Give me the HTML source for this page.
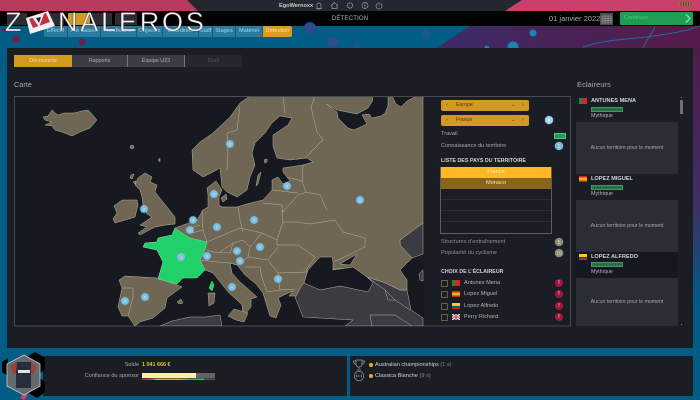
<!DOCTYPE html>
<html lang="fr"><head><meta charset="utf-8"><title>Détection</title>
<style>
html,body{margin:0;padding:0;width:700px;height:400px;overflow:hidden;background:#005d85}
body{position:relative;font-family:"Liberation Sans","DejaVu Sans",sans-serif;color:#b5b7ba}
.a{position:absolute;white-space:nowrap}
.t{position:absolute;white-space:nowrap;font-size:5.6px;line-height:8px;height:8px}
.tab{position:absolute;top:26px;height:11px;line-height:11px;text-align:center;font-size:5.6px;background:#2a7ba2;color:#a9d2e4;border-right:1px solid #0c6388;box-sizing:border-box}
.sub{position:absolute;top:55px;height:12px;line-height:12px;text-align:center;font-size:5.4px;background:#3a3d44;color:#a9abaf;box-sizing:border-box;border-right:1px solid #777}
.sel{position:absolute;left:441px;width:88px;height:11px;background:#d29a20;border-radius:2px;color:#4a3608;font-size:5.2px;line-height:11px}
.cb{position:absolute;left:441px;width:7px;height:7px;box-sizing:border-box;border:1px solid #6a6248;border-radius:1px}
.bdg{position:absolute;left:555px;width:8px;height:8px;border-radius:50%;background:#a3173f;color:#e8c6d0;font-size:5px;line-height:8px;text-align:center;font-weight:bold}
.fl{position:absolute;width:8px;height:6px;overflow:hidden}
.box{position:absolute;left:576px;width:102px;background:#2a2d33;color:#a7a9ad;text-align:center;font-size:5.2px}
.bar{position:absolute;left:591px;width:30px;height:3px;border:1px solid #5c8a6c;background:repeating-linear-gradient(90deg,#1f7a42 0 2.4px,#175a33 2.4px 3px)}
.nm{position:absolute;left:591px;font-size:5.6px;font-weight:bold;color:#d4d5d8;line-height:8px;white-space:nowrap}
.my{position:absolute;left:591px;font-size:5.4px;color:#b0b2b5;line-height:8px}
.logo{-webkit-text-stroke:.6px rgba(10,10,14,.55)}
</style></head><body>

<!-- background -->
<svg class="a" style="left:0;top:0" width="700" height="400" viewBox="0 0 700 400">
<defs>
<linearGradient id="pur" x1="0" y1="0" x2="1" y2="0"><stop offset="0" stop-color="#3b2c68"/><stop offset="1" stop-color="#561a48"/></linearGradient>
<linearGradient id="fade" x1="0" y1="0" x2="0" y2="1"><stop offset="0" stop-color="#4f1c4c"/><stop offset=".6" stop-color="#3f3064"/><stop offset="1" stop-color="#005d85"/></linearGradient>
<linearGradient id="conf" x1="0" y1="0" x2="1" y2="0"><stop offset="0" stop-color="#c9232f"/><stop offset=".15" stop-color="#d9432a"/><stop offset=".25" stop-color="#e3b52c"/><stop offset=".6" stop-color="#d5b52d"/><stop offset=".8" stop-color="#3fae4b"/><stop offset="1" stop-color="#2ed06e"/></linearGradient>
</defs>
<rect width="700" height="400" fill="#005d85"/>
<polygon points="470,26 700,26 700,48 437,48" fill="url(#pur)"/>
<rect x="693" y="48" width="7" height="260" fill="url(#fade)"/>
<rect x="0" y="0" width="700" height="11" fill="#23272e"/>
<polygon points="0,0 187,0 198,11 0,11" fill="#b83a5c"/>
<polygon points="522,0 700,0 700,11 505,11" fill="#c9406a"/>
<rect x="0" y="11" width="700" height="15" fill="#020203"/>
<circle cx="16" cy="39" r="3.5" fill="#7a1a4c"/><circle cx="82" cy="42" r="3.3" fill="#7a1a4c"/><circle cx="4" cy="30" r="2" fill="#5a2a60"/>
<circle cx="310" cy="28" r="6" fill="#2d4a8c"/><circle cx="333" cy="42" r="5.5" fill="#2b4f90"/>
<circle cx="426" cy="35" r="5" fill="#185a88"/><circle cx="357" cy="45" r="4" fill="#115a88"/>
<circle cx="533" cy="33" r="3.5" fill="#1787ad"/><circle cx="513" cy="47" r="5.5" fill="#1787ad"/><circle cx="487" cy="48" r="2.5" fill="#1787ad"/>
<path d="M583 47C610 38 630 40 660 35C675 33 690 30 700 26" fill="none" stroke="#256a9a" stroke-width="1"/>
<path d="M655 27C650 36 646 42 643 48" fill="none" stroke="#256a9a" stroke-width="1"/>
<rect x="7" y="48" width="686" height="300" fill="#1a1d24"/>
<rect x="43" y="356" width="304" height="40" fill="#1a1d24"/>
<rect x="350" y="356" width="343" height="40" fill="#1a1d24"/>
</svg>

<!-- top bar -->
<div class="a" style="left:279px;top:2px;font-size:5.6px;line-height:8px;font-weight:bold;color:#ccced1">EgoWernoxx</div>
<svg class="a" style="left:312px;top:0" width="80" height="11" viewBox="0 0 80 11" fill="none" stroke="#9a9da2" stroke-width=".7">
<path d="M4 8.5h6M5 8V5a2 2 0 0 1 4 0v3M6.5 9.5h1"/>
<path d="M19 5.5l3.5-3 3.5 3M20 5v3.5h5V5"/>
<circle cx="38" cy="5.5" r="2.6" stroke-dasharray="1.2 .6" stroke-width="1.1"/>
<circle cx="53" cy="5.5" r="3"/><path d="M53 4.5v2.8M53 3.4v.5"/>
<path d="M65.5 3.4a3 3 0 1 0 3 0M67 2.4v3"/>
</svg>
<div class="a" style="left:679px;top:2px;width:13px;height:4px;background:repeating-linear-gradient(90deg,#8a7a2c 0 1.5px,#7a3a3a 1.5px 2.5px)"></div>

<!-- black bar -->
<div class="a" style="left:7px;top:13px;width:20px;height:12px;background:#2a2d33"></div>
<div class="a" style="left:44px;top:13px;width:20px;height:12px;background:#2a2d33"></div>
<div class="a" style="left:68px;top:13px;width:22px;height:12px;background:#d29a20;border-radius:1px"></div>
<div class="a" style="left:92px;top:13px;width:20px;height:12px;background:#2a2d33"></div>
<div class="a" style="left:115px;top:13px;width:22px;height:12px;background:#2a2d33"></div>
<div class="a" style="left:0;top:13px;width:700px;text-align:center;font-size:6.300px;line-height:12px;color:#a9abae">DÉTECTION</div>
<div class="a" style="left:549px;top:13px;font-size:7.500px;line-height:12px;color:#a9abae">01 janvier 2022</div>
<svg class="a" style="left:600px;top:13px" width="13" height="12" viewBox="0 0 13 12"><rect width="13" height="12" fill="#4a4d52"/><path d="M2 3h9v7H2zM2 5.5h9M2 7.8h9M5 3v7M8 3v7" fill="none" stroke="#aaa" stroke-width=".6"/></svg>
<div class="a" style="left:620px;top:12px;width:73px;height:13px;background:#1f9d55;border-radius:1px;color:#3fd07c;font-size:5.6px;line-height:13px;text-indent:4px">Continuer</div>
<svg class="a" style="left:684px;top:13px" width="8" height="11" viewBox="0 0 8 11"><path d="M2 1.5l4 4-4 4" fill="none" stroke="#7fe3a8" stroke-width="1.3"/></svg>

<!-- nav tabs -->
<div class="tab" style="left:44px;width:24px">Effectif</div>
<div class="tab" style="left:68px;width:33px">Pré Saison</div>
<div class="tab" style="left:101px;width:36px">Planification</div>
<div class="tab" style="left:137px;width:26px">Objectifs</div>
<div class="tab" style="left:163px;width:36px">Coordinier</div>
<div class="tab" style="left:199px;width:14px">Staff</div>
<div class="tab" style="left:213px;width:23px">Stages</div>
<div class="tab" style="left:236px;width:27px">Matériel</div>
<div class="tab" style="left:263px;width:29px;background:#d89e22;color:#f7e3b0;border-radius:0 2px 2px 0;border:0">Détection</div>

<!-- logo watermark -->
<div class="a logo" style="left:5px;top:7px;font-size:27px;line-height:30px;color:#f4f4f4">Z</div>
<svg class="a" style="left:24px;top:9px" width="32" height="26" viewBox="0 0 32 26"><polygon points="2,9 24,2 31,17 6,25" fill="#f2f2f2"/><polygon points="5,10 22,4 26,13 9,19" fill="#c62f4a"/><polygon points="8,8 20,5 15,18" fill="#f2f2f2"/><polygon points="12,9 17,8 15,14" fill="#222"/></svg>
<div class="a logo" style="left:58px;top:7px;font-size:27px;line-height:30px;color:#f4f4f4;letter-spacing:2.800px">NALEROS</div>

<!-- sub tabs -->
<div class="sub" style="left:14px;width:58px;background:#d29a20;color:#f3deab;border:0">Découverte</div>
<div class="sub" style="left:72px;width:56px">Rapports</div>
<div class="sub" style="left:128px;width:57px">Équipe U23</div>
<div class="sub" style="left:185px;width:57px;background:#24272d;color:#4f5257;border:0">Draft</div>
<div class="a" style="left:14px;top:80px;font-size:7.300px;line-height:10px;color:#a5a7ab">Carte</div>
<div class="a" style="left:577px;top:80px;font-size:7.600px;line-height:10px;color:#a5a7ab">Eclaireurs</div>

<!-- map -->
<svg class="a" style="left:0;top:0" width="700" height="400" viewBox="0 0 700 400">
<defs><clipPath id="mc"><rect x="15" y="97" width="408.500" height="229"/></clipPath></defs>
<rect x="14.500" y="96.500" width="556" height="229.500" fill="#161920" stroke="#484b51" stroke-width="1"/>
<rect x="424" y="97" width="146" height="228" fill="#1a1d24"/>
<g clip-path="url(#mc)" stroke="#b9b4a2" stroke-width=".5" stroke-linejoin="round">
<!-- north africa + gray lands -->
<polygon fill="#3a3c41" points="160,326 172,321 190,317 205,317 220,315 222,326"/>
<polygon fill="#3a3c41" points="423,223 400,240 400,245 412,258 423,254"/>
<polygon fill="#3a3c41" points="367,277 383,282 400,290 407,290 411,310 423,318 423,326 345,326 353,320 320,318 303,317 295,297 300,280"/>
<polygon fill="#3a3c41" points="423,270 419,274 420,280 423,281"/>
<!-- mainland -->
<polygon fill="#6f6753" points="250,96 423,96 423,223 400,240 400,245 412,258 400,270 407,280 407,290 400,290 383,282 367,277 350,268 320,270 302,285 296,296 289,296 293,291 284,295 278,298 281,305 276,318 270,316 266,303 263,293 256,284 245,275 237,265 230,263 232,273 240,282 247,288 257,297 251,299 251,307 246,313 243,315 242,305 237,300 228,292 221,283 213,273 205,270 190,277 183,278 177,284 158,279 163,262 157,250 143,247 145,243 157,242 158,238 172,235 175,228 186,224 197,220 203,210 208,207 208,195 207,188 216,181 222,190 219,197 219,205 222,207 237,207 247,204 263,200 272,190 272,180 278,177 283,184 290,181 283,172 283,168 303,165 313,162 307,158 290,160 277,158 273,146 273,135 288,125 292,118 280,116 272,123 265,133 255,143 252,153 255,165 250,177 247,190 237,197 227,192 222,187 220,168 213,172 203,177 193,170 192,150 200,142 213,133 230,117 240,103"/>
<polygon fill="#6f6753" points="221,198 226,194 227,199 223,202"/>
<polygon fill="#6f6753" points="264,160 267,159 267,162 265,163"/><polygon fill="#6f6753" points="258,175 261,172 258,184 256,186"/>
<!-- seas overlay -->
<polygon fill="#161920" points="326,104 337,110 357,114 368,108 373,100 372,96 388,96 388,106 385,113 381,116 372,118 369,114 362,115 367,124 354,130 348,128 338,118 337,112"/>
<polygon fill="#161920" points="392,96 396,104 401,107 407,101 417,96"/>
<polygon fill="#161920" points="304,283 308,270 320,257 332,257 333,262 333,270 353,267 367,277 373,283 368,292 340,286 320,290"/>
<polygon fill="#161920" points="340,264 357,254 350,265"/>
<!-- UK etc -->
<polygon fill="#6f6753" points="138,178 145,173 152,177 150,182 157,185 155,192 167,207 175,217 175,224 166,225 155,227 140,235 138,233 147,227 140,225 152,217 147,214 143,205 142,197 140,190 135,185"/>
<polygon fill="#6f6753" points="122,200 137,200 138,205 135,217 132,218 115,223 113,219 117,213 114,206"/>
<polygon fill="#6f6753" points="131,175 134,174 132,179 130,178"/><polygon fill="#6f6753" points="133,182 136,181 135,184"/>
<polygon fill="#6f6753" points="130,146 133,145 134,148 131,149"/><polygon fill="#6f6753" points="158,160 160,158 160,162"/>
<polygon fill="#6f6753" points="43,117 48,116 52,110 55,113 58,115 64,113 68,113 74,113 82,111 88,110 91,113 97,120 90,128 80,132 72,136 62,132 55,130 52,126 45,125 52,122 45,120"/>
<!-- Spain -->
<polygon fill="#6f6753" points="119,280 125,276 157,278 177,285 182,287 167,298 165,308 153,318 140,322 135,326 128,316 122,316 118,307 122,288"/>
<polygon fill="#6f6753" points="177,302 181,299 183,303 179,304"/>
<polygon fill="#6f6753" points="208,293 215,293 214,303 209,306"/>
<polygon fill="#6f6753" points="228,316 234,309 248,313 244,322 236,320"/>
<!-- france -->
<polygon fill="#22d06a" stroke="#6fdc9a" points="175,228 182,233 190,238 207,242 205,250 200,260 205,270 197,278 183,278 177,284 158,279 163,262 157,250 143,247 145,243 157,242 158,238 172,235"/>
<polygon fill="#22d06a" stroke="#6fdc9a" points="212,281 214,285 212,291 209,288"/>
<!-- borders -->
<g fill="none">
<polyline points="122,288 133,288 133,297 128,316"/>
<polyline points="240,106 237,130 227,133 228,152 227,170"/>
<polyline points="283,96 285,113"/>
<polyline points="315,96 311,107 317,132 323,140 305,158"/>
<polyline points="287,177 302,181"/><polyline points="303,165 302,182 306,192"/>
<polyline points="272,190 298,193"/><polyline points="263,203 282,205"/>
<polyline points="306,192 320,195 327,210"/><polyline points="282,205 283,212 298,195 306,192"/>
<polyline points="238,207 240,220 243,232"/><polyline points="282,210 283,222 277,240 277,245"/>
<polyline points="283,222 297,222 310,224 335,220 343,232 365,238 365,247 353,253 333,262"/>
<polyline points="277,245 298,245 315,257 306,270 307,272"/>
<polyline points="228,233 240,228 262,233 277,240"/>
<polyline points="220,252 233,243 243,240 250,247 248,257"/>
<polyline points="250,247 262,233"/><polyline points="248,257 268,260 278,247"/>
<polyline points="268,260 278,273 307,272"/><polyline points="278,273 280,290 295,289"/>
<polyline points="245,267 260,267 262,278 267,292 280,290"/><polyline points="237,265 248,257"/>
<polyline points="202,210 203,230 207,242 228,233"/>
<polyline points="185,230 200,225"/><polyline points="192,233 203,230"/>
<polyline points="207,250 213,252 230,253 233,243"/><polyline points="200,260 217,262 230,263 237,265"/>
<polyline points="367,277 385,290 395,300 410,310"/><polyline points="370,315 395,315 412,326"/>
<polyline points="385,290 388,300 395,300"/>
<polyline points="370,315 372,326"/>
</g>
</g>
<!-- pins -->
<g fill="#7dc2e6" stroke="#7dc2e6" stroke-opacity=".4" stroke-width="1.400" stroke-dasharray="1 .6">
<circle cx="144" cy="209" r="3.800"/><circle cx="230" cy="144" r="3.800"/><circle cx="214" cy="194" r="3.800"/><circle cx="193" cy="220" r="3.800"/><circle cx="190" cy="230" r="3.800"/>
<circle cx="287" cy="186" r="3.800"/><circle cx="360" cy="200" r="3.800"/><circle cx="254" cy="220" r="3.800"/><circle cx="217" cy="227" r="3.800"/>
<circle cx="207" cy="256" r="3.800"/><circle cx="145" cy="297" r="3.800"/><circle cx="125" cy="301" r="3.800"/><circle cx="237" cy="251" r="3.800"/><circle cx="240" cy="261" r="3.800"/>
<circle cx="260" cy="247" r="3.800"/><circle cx="278" cy="279" r="3.800"/><circle cx="232" cy="287" r="3.800"/>
<circle cx="181" cy="257" r="3.800" fill="#8fbfdc"/>
</g>
<g font-family="Liberation Sans,sans-serif" font-size="4" fill="#d8edf8" text-anchor="middle">
<text x="144" y="210.500">7</text><text x="230" y="145.500">6</text><text x="214" y="195.500">6</text><text x="193" y="221.500">3</text><text x="190" y="231.500">1</text>
<text x="287" y="187.500">6</text><text x="360" y="201.500">6</text><text x="254" y="221.500">2</text><text x="217" y="228.500">2</text>
<text x="207" y="257.500">6</text><text x="145" y="298.500">4</text><text x="125" y="302.500">0</text><text x="237" y="252.500">0</text><text x="240" y="262.500">6</text>
<text x="260" y="248.500">5</text><text x="278" y="280.500">5</text><text x="232" y="288.500">4</text><text x="181" y="258.500">1</text>
</g>
</svg>

<!-- right controls -->
<div class="sel" style="top:100px"><span style="position:absolute;left:5px">‹</span><span style="position:absolute;left:15px">Europe</span><span style="position:absolute;left:70px">⌄</span><span style="position:absolute;left:81px">›</span></div>
<div class="sel" style="top:115px"><span style="position:absolute;left:5px">‹</span><span style="position:absolute;left:15px">France</span><span style="position:absolute;left:70px">⌄</span><span style="position:absolute;left:81px">›</span></div>
<svg class="a" style="left:544px;top:115px" width="10" height="10" viewBox="0 0 10 10"><circle cx="5" cy="5" r="4.300" fill="#7fc4e8"/><path d="M5 1v8M1.500 3l7 4M1.500 7l7-4" stroke="#fff" stroke-width=".7"/></svg>
<div class="t" style="left:441px;top:130px;color:#a8aaae">Travail</div>
<div class="a" style="left:554px;top:133px;width:10px;height:4px;border:.5px solid #56c47c;background:#1f9d55"></div>
<div class="t" style="left:441px;top:142px;color:#a8aaae">Connaissance du territoire</div>
<svg class="a" style="left:554px;top:141px" width="10" height="10" viewBox="0 0 10 10"><circle cx="5" cy="5" r="4.300" fill="#7fb8da"/><text x="5" y="6.800" font-size="5" fill="#dff" text-anchor="middle" font-family="Liberation Sans">1</text></svg>
<div class="t" style="left:441px;top:157px;font-weight:bold;font-size:5.300px;color:#d0d1d4">LISTE DES PAYS DU TERRITOIRE</div>

<div class="a" style="left:440px;top:167px;width:110px;height:66px;border:1px solid #5a5d63;border-top:0"></div>
<div class="a" style="left:441px;top:189px;width:110px;height:11px;border-bottom:1px solid #2c3037;box-sizing:border-box"></div>
<div class="a" style="left:441px;top:200px;width:110px;height:11px;border-bottom:1px solid #2c3037;box-sizing:border-box"></div>
<div class="a" style="left:441px;top:211px;width:110px;height:11px;border-bottom:1px solid #2c3037;box-sizing:border-box"></div>
<div class="a" style="left:441px;top:167px;width:110px;height:11px;background:#fdb827;color:#f7edc8;font-size:5.600px;line-height:11px;text-align:center">France</div>
<div class="a" style="left:441px;top:178px;width:110px;height:11px;background:#89651c;color:#eee3c0;font-size:5.600px;line-height:11px;text-align:center">Monaco</div>

<div class="t" style="left:441px;top:238px;color:#8e9094">Structures d'entraînement</div>
<div class="t" style="left:441px;top:249px;color:#8e9094">Popularité du cyclisme</div>
<svg class="a" style="left:554px;top:237px" width="10" height="21" viewBox="0 0 10 21"><circle cx="5" cy="5" r="4.300" fill="#8d8a78"/><circle cx="5" cy="16" r="4.300" fill="#8d8a78"/><text x="5" y="6.800" font-size="5" fill="#d6d4c6" text-anchor="middle" font-family="Liberation Sans">5</text><text x="5" y="17.800" font-size="5" fill="#d6d4c6" text-anchor="middle" font-family="Liberation Sans">10</text></svg>
<div class="t" style="left:441px;top:268px;font-weight:bold;font-size:5.300px;color:#d0d1d4">CHOIX DE L'ÉCLAIREUR</div>

<div class="cb" style="top:280px"></div><div class="cb" style="top:291px"></div><div class="cb" style="top:303px"></div><div class="cb" style="top:314px"></div>
<div class="fl" style="left:452px;top:280px;background:linear-gradient(90deg,#1a8a3a 0 40%,#d8232a 40%)"></div>
<div class="fl" style="left:452px;top:291px;background:linear-gradient(#c8262a 0 25%,#f1b517 25% 75%,#c8262a 75%)"></div>
<div class="fl" style="left:452px;top:303px;background:linear-gradient(#f1d017 0 50%,#2a3f90 50% 75%,#c8262a 75%)"></div>
<svg class="fl" style="left:452px;top:314px" viewBox="0 0 8 6"><rect width="8" height="6" fill="#2b3f88"/><path d="M0 0l8 6M8 0L0 6" stroke="#eee" stroke-width="1.200"/><path d="M4 0v6M0 3h8" stroke="#eee" stroke-width="2"/><path d="M4 0v6M0 3h8" stroke="#c8262a" stroke-width="1"/></svg>
<div class="t" style="left:464px;top:279px;color:#b0b2b5">Antunes Mena</div>
<div class="t" style="left:464px;top:290px;color:#b0b2b5">Lopez Miguel</div>
<div class="t" style="left:464px;top:302px;color:#b0b2b5">Lopez Alfredo</div>
<div class="t" style="left:464px;top:313px;color:#b0b2b5">Perry Richard</div>
<div class="bdg" style="top:279px">!</div><div class="bdg" style="top:290px">!</div><div class="bdg" style="top:302px">!</div><div class="bdg" style="top:313px">!</div>

<!-- scouts -->
<div class="a" style="left:576px;top:252px;width:102px;height:26px;background:#15181e"></div>
<div class="fl" style="left:579px;top:98px;background:linear-gradient(90deg,#1a8a3a 0 40%,#d8232a 40%)"></div>
<div class="nm" style="top:97px">ANTUNES MENA</div><div class="bar" style="top:107px"></div><div class="my" style="top:112px">Mythique</div>
<div class="box" style="top:122px;height:52px;line-height:52px">Aucun territoire pour le moment</div>
<div class="fl" style="left:579px;top:176px;background:linear-gradient(#c8262a 0 25%,#f1b517 25% 75%,#c8262a 75%)"></div>
<div class="nm" style="top:175px">LOPEZ MIGUEL</div><div class="bar" style="top:185px"></div><div class="my" style="top:190px">Mythique</div>
<div class="box" style="top:200px;height:52px;line-height:52px">Aucun territoire pour le moment</div>
<div class="fl" style="left:579px;top:254px;background:linear-gradient(#f1d017 0 50%,#2a3f90 50% 75%,#c8262a 75%)"></div>
<div class="nm" style="top:253px">LOPEZ ALFREDO</div><div class="bar" style="top:262px"></div><div class="my" style="top:268px">Mythique</div>
<div class="box" style="top:278px;height:48px;line-height:48px">Aucun territoire pour le moment</div>
<div class="a" style="left:680px;top:100px;width:3px;height:14px;background:#6d7076"></div>
<div class="a" style="left:681px;top:97px;width:1px;height:1px;background:#888"></div>
<div class="a" style="left:681px;top:324px;width:1px;height:1px;background:#888"></div>

<!-- bottom left -->
<svg class="a" style="left:0;top:350px" width="50" height="50" viewBox="0 0 50 50">
<polygon points="35,2 45,8 45,20 35,26 25,20 25,8" fill="#000"/>
<polygon points="37,26 45,32 45,42 37,48 27,42 27,32" fill="#000"/>
<polygon points="2,12 8,8 8,26 2,22" fill="#000"/>
<polygon points="24,42 28,46 24,50 20,48" fill="#c9406a"/>
<polygon points="24,5 40,14 40,36 24,45 7,36 7,14" fill="#66696c" stroke="#c8c9cb" stroke-width=".8"/>
<path d="M17 12l14 0 5 5-3 7-2-1v15H16V23l-2 1-3-7z" fill="#262e3c"/>
<path d="M17 12l-6 5 3 7 2-1zM31 12l5 5-3 7-2-1z" fill="#a83a3a"/>
<rect x="18" y="20" width="12" height="3" fill="#dfe1e4"/>
</svg>
<div class="t" style="left:60px;width:79px;top:361px;text-align:right;color:#a8aaae">Solde</div>
<div class="t" style="left:142px;top:361px;color:#e2c52e;font-weight:bold;font-size:5.400px">1 041 666 €</div>
<div class="t" style="left:60px;width:79px;top:372px;text-align:right;color:#a8aaae">Confiance du sponsor</div>
<svg class="a" style="left:142px;top:373px" width="74" height="8" viewBox="0 0 74 8"><rect width="73" height="5" fill="#606265"/><rect width="54" height="5" fill="#fdeeb0"/><rect y="5.500" width="73" height="1.500" fill="#55585c"/><rect y="5.500" width="62" height="1.500" fill="url(#conf)"/></svg>

<!-- bottom right -->
<svg class="a" style="left:352px;top:358px" width="14" height="24" viewBox="0 0 14 24" fill="none" stroke="#999ca0" stroke-width=".7">
<path d="M4 2h6v4a3 3 0 0 1-6 0zM4 3H1.500c0 2 1 3 2.700 3.500M10 3h2.500c0 2-1 3-2.700 3.500M7 9v2M5 12h4"/>
<circle cx="7" cy="18" r="4.800"/><path d="M4.500 16.500v3M9.500 16.500v3M5.500 18h3"/>
</svg>
<div class="a" style="left:369px;top:363px;width:4px;height:4px;border-radius:50%;background:#e5b02e"></div>
<div class="a" style="left:369px;top:374px;width:4px;height:4px;border-radius:50%;background:#e5b02e"></div>
<div class="t" style="left:375px;top:361px;color:#d0d2d5">Australian championships <span style="color:#85888c">(1 s)</span></div>
<div class="t" style="left:375px;top:372px;color:#d0d2d5">Classica Bianche <span style="color:#85888c">(9 s)</span></div>
</body></html>
